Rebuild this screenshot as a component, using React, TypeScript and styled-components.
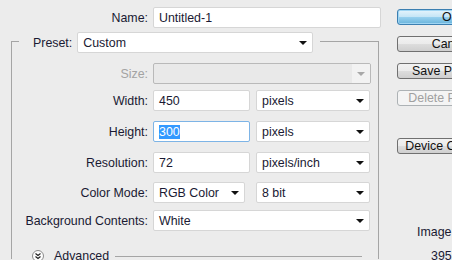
import * as React from "react";
import styled, { createGlobalStyle, css } from "styled-components";

const GlobalStyle = createGlobalStyle`
  html, body {
    margin: 0;
    padding: 0;
    background: #ececec;
    overflow: hidden;
  }
  body {
    font-family: "Liberation Sans", Arial, sans-serif;
    font-size: 12.4px;
    color: #1a1a33;
  }
`;

const Dialog = styled.div`
  display: flex;
  width: 452px;
  height: 260px;
  padding-top: 7px;
  box-sizing: border-box;
  overflow: hidden;
`;

const Main = styled.div`
  width: 385px;
  flex: none;
  display: flex;
  flex-direction: column;
`;

const Row = styled.div<{ $label: number; $top?: number }>`
  display: grid;
  grid-template-columns: ${(p) => p.$label}px auto;
  column-gap: 5px;
  align-items: center;
  margin-top: ${(p) => p.$top ?? 0}px;
`;

const Label = styled.div<{ $disabled?: boolean }>`
  text-align: right;
  white-space: nowrap;
  color: ${(p) => (p.$disabled ? "#a3a3a3" : "#1a1a33")};
`;

const Controls = styled.div`
  display: flex;
  align-items: center;
`;

const boxBase = css`
  box-sizing: border-box;
  height: 21px;
  border: 1px solid #d6d6d6;
  border-radius: 2px;
  background: #fff;
  display: flex;
  align-items: center;
  padding: 0 5px;
  white-space: nowrap;
  overflow: hidden;
`;

const TextBox = styled.div<{ $width: number; $focused?: boolean }>`
  ${boxBase};
  width: ${(p) => p.$width}px;
  ${(p) =>
    p.$focused &&
    css`
      border-color: #7db4e6;
    `}
`;

const Selection = styled.span`
  background: #3399ff;
  color: #fff;
`;

const SelectBox = styled.div<{ $width: number; $disabled?: boolean; $ml?: number }>`
  ${boxBase};
  width: ${(p) => p.$width}px;
  margin-left: ${(p) => p.$ml ?? 0}px;
  justify-content: space-between;
  padding-right: 0;
  ${(p) =>
    p.$disabled &&
    css`
      background: #e9e9e9;
      border-color: #b9b9b9;
    `}
`;

const ArrowCell = styled.div<{ $disabled?: boolean }>`
  width: 18px;
  height: 100%;
  display: flex;
  align-items: center;
  justify-content: center;
  background: ${(p) => (p.$disabled ? "#f2f2f2" : "transparent")};

  &::after {
    content: "";
    border-left: 4px solid transparent;
    border-right: 4px solid transparent;
    border-top: 4px solid ${(p) => (p.$disabled ? "#a8a8a8" : "#111")};
  }
`;

const Group = styled.fieldset`
  margin: 1px 0 0 11px;
  padding: 0;
  width: 368px;
  box-sizing: border-box;
  border: 1px solid #a5a5a5;
  border-bottom: none;
  min-width: 0;
  height: 230px;
`;

const Legend = styled.legend`
  margin-left: 7px;
  padding: 3px 7px 0 14px;
  display: flex;
  align-items: center;
  gap: 5px;
`;

const AdvancedRow = styled.div`
  display: flex;
  align-items: center;
  margin: 18px 0 0 20px;
  width: 330px;
`;

const AdvancedText = styled.span`
  margin-left: 10px;
  margin-right: 6px;
`;

const Rule = styled.div`
  flex: 1;
  height: 1px;
  background: #a5a5a5;
`;

const Side = styled.div`
  margin-left: 12px;
  display: flex;
  flex-direction: column;
`;

const Button = styled.div<{ $primary?: boolean; $disabled?: boolean; $top: number }>`
  box-sizing: border-box;
  width: 108px;
  height: 17px;
  margin-top: ${(p) => p.$top}px;
  border: 1px solid #707070;
  border-radius: 3px;
  background: linear-gradient(#f2f2f2 0%, #ebebeb 50%, #dddddd 51%, #cfcfcf 100%);
  display: flex;
  align-items: center;
  justify-content: center;
  white-space: nowrap;
  color: #111;
  ${(p) =>
    p.$primary &&
    css`
      border-color: #3c7fb1;
      background: linear-gradient(#e5f4fc 0%, #c4e5f6 50%, #98d1ef 51%, #68b3db 100%);
      box-shadow: inset 0 0 0 1px #9fd5f3;
    `}
  ${(p) =>
    p.$disabled &&
    css`
      border-color: #adb2b5;
      background: #f4f4f4;
      color: #a0a0a0;
    `}
`;

const Info = styled.div`
  margin: 71px 0 0 20px;
  display: flex;
  flex-direction: column;
  gap: 10px;
  white-space: nowrap;
`;

const InfoValue = styled.span`
  margin-left: 14px;
`;

const AdvancedIcon = () => (
  <svg width="12" height="12" viewBox="0 0 12 12">
    <circle cx="6" cy="6" r="5.5" fill="#fdfdfd" stroke="#8a8a8a" />
    <polyline points="3.5,3.5 6,5.5 8.5,3.5" fill="none" stroke="#222" strokeWidth="1.2" />
    <polyline points="3.5,6.5 6,8.5 8.5,6.5" fill="none" stroke="#222" strokeWidth="1.2" />
  </svg>
);

const Select = ({ width, value, disabled, ml }: { width: number; value?: string; disabled?: boolean; ml?: number }) => (
  <SelectBox $width={width} $disabled={disabled} $ml={ml}>
    <span>{value}</span>
    <ArrowCell $disabled={disabled} />
  </SelectBox>
);

export default function App() {
  return (
    <>
      <GlobalStyle />
      <Dialog>
        <Main>
          <Row $label={148}>
            <Label>Name:</Label>
            <TextBox $width={228}>Untitled-1</TextBox>
          </Row>

          <Group>
            <Legend>
              <Label>Preset:</Label>
              <Select width={236} value="Custom" />
            </Legend>

            <Row $label={136} $top={10}>
              <Label $disabled>Size:</Label>
              <Select width={218} disabled />
            </Row>

            <Row $label={136} $top={6}>
              <Label>Width:</Label>
              <Controls>
                <TextBox $width={97}>450</TextBox>
                <Select width={114} value="pixels" ml={6} />
              </Controls>
            </Row>

            <Row $label={136} $top={10}>
              <Label>Height:</Label>
              <Controls>
                <TextBox $width={97} $focused>
                  <Selection>300</Selection>
                </TextBox>
                <Select width={114} value="pixels" ml={6} />
              </Controls>
            </Row>

            <Row $label={136} $top={10}>
              <Label>Resolution:</Label>
              <Controls>
                <TextBox $width={97}>72</TextBox>
                <Select width={114} value="pixels/inch" ml={6} />
              </Controls>
            </Row>

            <Row $label={136} $top={9}>
              <Label>Color Mode:</Label>
              <Controls>
                <Select width={92} value="RGB Color" />
                <Select width={114} value="8 bit" ml={11} />
              </Controls>
            </Row>

            <Row $label={136} $top={7}>
              <Label>Background Contents:</Label>
              <Select width={217} value="White" />
            </Row>

            <AdvancedRow>
              <AdvancedIcon />
              <AdvancedText>Advanced</AdvancedText>
              <Rule />
            </AdvancedRow>
          </Group>
        </Main>

        <Side>
          <Button $primary $top={2}>OK</Button>
          <Button $top={11}>Cancel</Button>
          <Button $top={11}>Save Preset...</Button>
          <Button $disabled $top={11}>Delete Preset...</Button>
          <Button $top={32}>Device Central...</Button>
          <Info>
            <span>Image Size:</span>
            <InfoValue>395.5K</InfoValue>
          </Info>
        </Side>
      </Dialog>
    </>
  );
}
